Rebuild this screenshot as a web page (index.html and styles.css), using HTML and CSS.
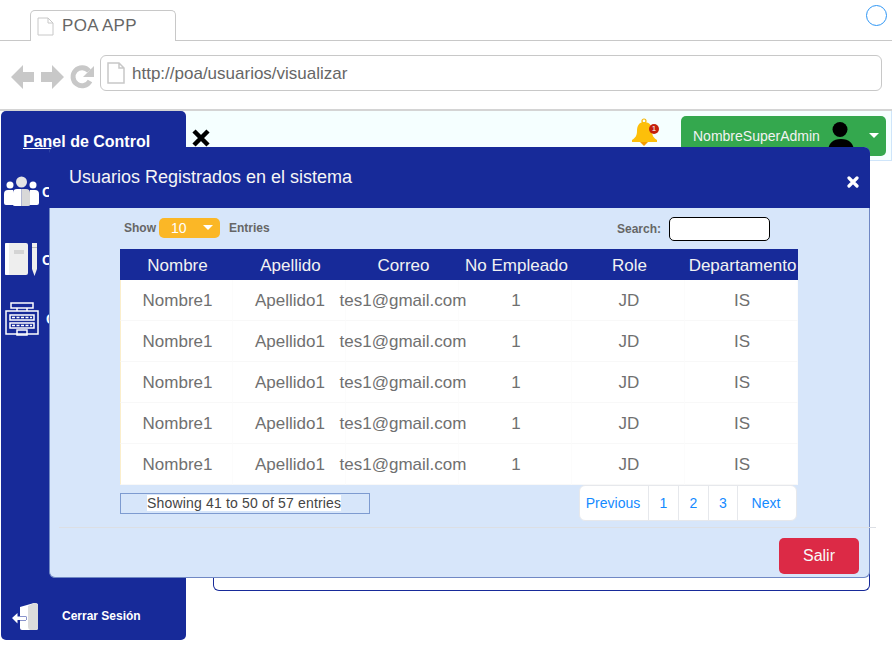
FILE: index.html
```html
<!DOCTYPE html>
<html lang="es">
<head>
  <meta charset="UTF-8" />
  <title>POA APP</title>
  <link rel="stylesheet" href="styles.css">
</head>
<body>
  <div class="tabbar">
    <div class="tab">
      <svg class="page-icon" width="17" height="19" viewBox="0 0 17 19"><path d="M1 1h10l5 5v12H1z M11 1v5h5" fill="#fff" stroke="#c8c8c8" stroke-width="1"/></svg>
      <span>POA APP</span>
    </div>
    <div class="circle"></div>
  </div>
  <div class="addressbar">
    <svg class="nav-icons" width="84" height="26" viewBox="0 0 84 26">
      <path d="M0 13 12 1v7h11v10H12v7z" fill="#c8c8c8"/>
      <path d="M53 13 41 1v7H30v10h11v7z" fill="#c8c8c8"/>
      <path d="M79 17a9 9 0 1 1-1-10" fill="none" stroke="#c8c8c8" stroke-width="5"/>
      <path d="M83 2v11H72z" fill="#c8c8c8"/>
    </svg>
    <div class="url">
      <svg width="18" height="22" viewBox="0 0 18 22"><path d="M1 1h11l5 5v15H1z M12 1v5h5" fill="#fff" stroke="#c8c8c8" stroke-width="1.5"/></svg>
      <span>http://poa/usuarios/visualizar</span>
    </div>
  </div>

  <div class="app">
    <aside class="sidebar">
      <h2 class="side-title">Panel de Control</h2>
      <div class="side-item side-people">
        <svg width="35" height="31" viewBox="0 0 35 31">
          <circle cx="6" cy="9" r="3.5" fill="#fff"/>
          <circle cx="29" cy="9" r="3.5" fill="#fff"/>
          <circle cx="17.5" cy="6" r="5.5" fill="#e4e4e4"/>
          <path d="M0 27V18q0-4 4-4h5v15H2q-2 0-2-2zM35 27V18q0-4-4-4h-5v15h7q2 0 2-2z" fill="#fff"/>
          <path d="M9 29V17q0-4 4-4h4.5v17H11q-2 0-2-1z" fill="#fff"/>
          <path d="M26 29V17q0-4-4-4h-4.500v17H24q2 0 2-1z" fill="#d8d8d8"/>
        </svg>
        <span>C</span>
      </div>
      <div class="side-item side-notes">
        <svg width="33" height="35" viewBox="0 0 33 35">
          <rect x="0" y="1" width="23" height="32" rx="2" fill="#eee"/>
          <rect x="0" y="1" width="4" height="32" rx="1" fill="#fff"/>
          <rect x="9" y="8" width="10" height="4" fill="#d4d4d4"/>
          <path d="M27 1h5v26l-2.500 7-2.500-7z" fill="#eee"/>
          <rect x="27" y="5" width="5" height="1" fill="#bbb"/>
        </svg>
        <span>C</span>
      </div>
      <div class="side-item side-register">
        <svg width="35" height="34" viewBox="0 0 35 34" fill="none" stroke="#fff" stroke-width="1.500">
          <rect x="6" y="1" width="22" height="5"/>
          <path d="M12 6v3M22 6v3"/>
          <rect x="1" y="9" width="32" height="23"/>
          <rect x="5" y="13" width="24" height="5"/>
          <rect x="5" y="21" width="24" height="5"/>
          <path d="M7 15.500h20M7 23.500h20" stroke-dasharray="3 1.500"/>
          <rect x="12" y="28" width="10" height="5"/>
        </svg>
        <span>C</span>
      </div>
      <div class="side-logout">
        <svg width="27" height="28" viewBox="0 0 27 28">
          <path d="M8 5 22 1q4 0 4 2v23q0 2-2 2H10q-2 0-2-2z" fill="#fff"/>
          <path d="M16 4 22 1q4 0 4 2v23q0 2-2 2h-6q-2-1-2-3z" fill="#dcdcdc"/>
          <path d="M0 16 5.500 11v3.500H14v3.500H5.500v3.500z" fill="#fff" stroke="#172a99" stroke-width="1" paint-order="stroke"/>
        </svg>
        <span>Cerrar Sesión</span>
      </div>
    </aside>

    <div class="main">
      <header class="topbar">
        <svg class="close-x" width="20" height="18" viewBox="0 0 20 18"><path d="M3 2l14 14M17 2 3 16" stroke="#000" stroke-width="4.500" fill="none"/></svg>
        <div class="bell">
          <svg width="27" height="30" viewBox="0 0 27 30">
            <circle cx="13" cy="3" r="2" fill="none" stroke="#f7b500" stroke-width="1.200"/>
            <path d="M13 4c-5 0-7 4-7 9 0 5-2 7-5 9v2h25v-2c-3-2-5-4-5-9 0-5-2-9-8-9z" fill="#fdbf0a"/>
            <path d="M9 24h8l-4 4z" fill="#f59c00"/>
          </svg>
          <span class="bell-badge">1</span>
        </div>
        <div class="user-btn">
          <span>NombreSuperAdmin</span>
          <svg width="26" height="34" viewBox="0 0 26 34"><circle cx="12" cy="7.500" r="7.500" fill="#000"/><path d="M0 30c0-9 5-13 13-13s13 4 13 13z" fill="#000"/></svg>
          <i class="caret"></i>
        </div>
      </header>
      <div class="frame"></div>
    </div>
  </div>

  <div class="modal">
    <div class="modal-head">
      <h3>Usuarios Registrados en el sistema</h3>
      <svg class="modal-close" width="12" height="12" viewBox="0 0 12 12"><path d="M2 2l8 8M10 2l-8 8" stroke="#fff" stroke-width="3.200" stroke-linecap="round"/></svg>
    </div>
    <div class="modal-body">
      <div class="dt-top">
        <div class="dt-length">
          <span>Show</span>
          <div class="pill">10<i class="caret"></i></div>
          <span>Entries</span>
        </div>
        <div class="dt-search">
          <span>Search:</span>
          <input type="text">
        </div>
      </div>
      <table class="dt">
        <thead>
          <tr><th>Nombre</th><th>Apellido</th><th>Correo</th><th>No Empleado</th><th>Role</th><th>Departamento</th></tr>
        </thead>
        <tbody>
          <tr><td>Nombre1</td><td>Apellido1</td><td><span class="mail">tes1@gmail.com</span></td><td>1</td><td>JD</td><td>IS</td></tr>
          <tr><td>Nombre1</td><td>Apellido1</td><td><span class="mail">tes1@gmail.com</span></td><td>1</td><td>JD</td><td>IS</td></tr>
          <tr><td>Nombre1</td><td>Apellido1</td><td><span class="mail">tes1@gmail.com</span></td><td>1</td><td>JD</td><td>IS</td></tr>
          <tr><td>Nombre1</td><td>Apellido1</td><td><span class="mail">tes1@gmail.com</span></td><td>1</td><td>JD</td><td>IS</td></tr>
          <tr><td>Nombre1</td><td>Apellido1</td><td><span class="mail">tes1@gmail.com</span></td><td>1</td><td>JD</td><td>IS</td></tr>
        </tbody>
      </table>
      <div class="dt-bottom">
        <div class="dt-info"><span>Showing 41 to 50 of 57 entries</span></div>
        <div class="pagination">
          <a class="pg-prev">Previous</a><a>1</a><a>2</a><a class="pg-last">3</a><a class="pg-next">Next</a>
        </div>
      </div>
    </div>
    <div class="modal-foot">
      <button class="btn-salir">Salir</button>
    </div>
  </div>
</body>
</html>
```

FILE: styles.css
```css
* {
  box-sizing: border-box;
}

body {
  margin: 0;
  height: 645px;
  overflow: hidden;
  font-family: "Liberation Sans", Arial, sans-serif;
  background-color: #fff;
  position: relative;
}

.tabbar {
  height: 41px;
  padding: 10px 5px 0 30px;
  border-bottom: 1px solid #c8c8c8;
  display: flex;
  justify-content: space-between;
  align-items: flex-start;
}

.tab {
  width: 146px;
  height: 31px;
  padding: 5px 0 0 6px;
  display: flex;
  align-items: flex-start;
  gap: 8px;
  background-color: #fff;
  border: 1px solid #c8c8c8;
  border-bottom: none;
  border-radius: 5px 5px 0 0;
  font-size: 17px;
  line-height: 19px;
  letter-spacing: 0.3px;
  color: #666;
}

.page-icon {
  flex: none;
  margin-top: 1px;
}

.circle {
  width: 21px;
  height: 21px;
  margin-top: -5px;
  border: 1px solid #2e96f5;
  border-radius: 50%;
}

.addressbar {
  height: 70px;
  padding: 14px 10px 0 11px;
  border-bottom: 2px solid #d4d4d4;
  display: flex;
  align-items: flex-start;
}

.nav-icons {
  margin: 9px 5px 0 0;
  flex: none;
}

.url {
  flex: 1;
  height: 36px;
  padding: 1px 0 0 6px;
  display: flex;
  align-items: center;
  gap: 7px;
  border: 1px solid #c8c8c8;
  border-radius: 6px;
  font-size: 17px;
  color: #666;
}

.url svg {
  margin-top: -1px;
}

.app {
  display: flex;
  height: 534px;
  padding-left: 1px;
}

.sidebar {
  width: 185px;
  height: 529px;
  padding-top: 21px;
  display: flex;
  flex-direction: column;
  flex: none;
  background-color: #172a99;
  border-radius: 5px;
  color: #fff;
}

.side-title {
  margin: 0 0 0 22px;
  font-size: 16px;
  line-height: 19px;
  font-weight: bold;
  text-decoration: underline;
}

.side-item {
  display: flex;
  align-items: center;
  padding-left: 3px;
  font-size: 14px;
  font-weight: bold;
}

.side-people {
  margin-top: 25px;
  gap: 3px;
}

.side-notes {
  margin-top: 35px;
  padding-left: 4px;
  gap: 4px;
}

.side-register {
  margin-top: 25px;
  padding-left: 4px;
  gap: 6px;
}

.side-logout {
  margin-top: auto;
  margin-bottom: 10px;
  padding-left: 11px;
  display: flex;
  align-items: center;
  gap: 23px;
  font-size: 12px;
  font-weight: bold;
}

.main {
  flex: 1;
  display: flex;
  flex-direction: column;
}

.topbar {
  height: 50px;
  padding: 5px 5px 0 5px;
  display: flex;
  align-items: flex-start;
  background-color: #f5ffff;
  border-bottom: 1px solid #cfe5fa;
  border-right: 1px solid #cfe5fa;
}

.close-x {
  margin-top: 13px;
}

.bell {
  margin: 2px 23px 0 auto;
  position: relative;
}

.bell-badge {
  position: absolute;
  top: 6px;
  right: -1px;
  width: 10px;
  height: 10px;
  border-radius: 50%;
  background-color: #c4200c;
  color: #fff;
  font-size: 8px;
  line-height: 10px;
  text-align: center;
}

.user-btn {
  width: 205px;
  height: 40px;
  padding: 6px 7px 0 12px;
  display: flex;
  align-items: flex-start;
  background-color: #34a84e;
  border-radius: 5px;
  color: #f2f2f2;
  font-size: 14px;
}

.user-btn span {
  margin: 6px 8px 0 0;
  line-height: 17px;
}

.user-btn svg {
  flex: none;
}

.caret {
  width: 0;
  height: 0;
  border-left: 5px solid transparent;
  border-right: 5px solid transparent;
  border-top: 5px solid #fff;
}

.user-btn .caret {
  margin: 11px 0 0 15px;
}

.frame {
  height: 430px;
  margin: 0 22px 0 27px;
  border: 1px solid #172a99;
  border-top: none;
  border-radius: 0 0 6px 6px;
}

.modal {
  position: absolute;
  top: 147px;
  left: 49px;
  width: 821px;
  height: 431px;
  display: flex;
  flex-direction: column;
  background-color: #d7e6fa;
  border: 1px solid #7088c4;
  border-top: none;
  border-radius: 6px;
  color: #666;
}

.modal-head {
  height: 61px;
  margin: 0 -1px;
  padding: 0 11px 0 20px;
  display: flex;
  justify-content: space-between;
  background-color: #172a99;
  border-radius: 6px 6px 0 0;
  color: #f5f5f5;
}

.modal-head h3 {
  margin: 20px 0 0;
  font-size: 18px;
  line-height: 20px;
  font-weight: normal;
}

.modal-close {
  margin-top: 29px;
}

.modal-body {
  height: 319px;
  padding: 0 71px 0 70px;
}

.dt-top {
  height: 41px;
  padding: 9px 28px 0 4px;
  display: flex;
  justify-content: space-between;
  align-items: flex-start;
  font-size: 12px;
  font-weight: bold;
}

.dt-length {
  display: flex;
  align-items: center;
  height: 21px;
  gap: 3px;
}

.dt-length span:last-child {
  margin-left: 6px;
}

.pill {
  width: 61px;
  height: 20px;
  padding-left: 12px;
  display: flex;
  align-items: center;
  background-color: #fbb726;
  border-radius: 5px;
  color: #fff;
  font-size: 14px;
  font-weight: normal;
}

.pill .caret {
  margin-left: 16px;
}

.dt-search {
  display: flex;
  align-items: center;
  gap: 8px;
}

.dt-search input {
  width: 101px;
  height: 24px;
  background-color: #fff;
  border: 1px solid #000;
  border-radius: 5px;
}

.dt {
  width: 678px;
  border-collapse: separate;
  border-spacing: 0;
  table-layout: fixed;
  background-color: #fff;
  text-align: center;
}

.dt th {
  height: 31px;
  padding: 3px 0 0 2px;
  background-color: #172a99;
  color: #f2f2f2;
  font-size: 17px;
  font-weight: normal;
}

.dt td {
  height: 41px;
  padding: 2px 0 0 2px;
  border-bottom: 1px solid #f8f8f8;
  border-right: 1px solid #fcfcfc;
  font-size: 17px;
  color: #707070;
}

.dt td:first-child {
  border-left: 1px solid #fbeecb;
}

.mail {
  display: inline-block;
  margin: 0 -10px;
  white-space: nowrap;
}

.dt-bottom {
  display: flex;
  justify-content: space-between;
  align-items: flex-start;
}

.dt-info {
  width: 250px;
  height: 21px;
  margin-top: 8px;
  padding-left: 26px;
  border: 1px solid #7e9bd0;
  font-size: 14px;
  line-height: 18px;
  letter-spacing: 0.17px;
  color: #444;
}

.dt-info span {
  background-color: #fff;
}

.pagination {
  height: 36px;
  margin-right: 1px;
  display: flex;
  background-color: #fff;
  border: 1px solid #e6e8ec;
  border-radius: 6px;
  font-size: 14px;
  color: #148aff;
}

.pagination a {
  width: 30px;
  line-height: 35px;
  text-align: center;
  border-right: 1px solid #e6e8ec;
}

.pagination .pg-prev {
  width: 69px;
  padding-right: 2px;
}

.pagination .pg-last {
  width: 29px;
}

.pagination .pg-next {
  width: 58px;
  padding-right: 2px;
  border-right: none;
}

.modal-foot {
  margin: 0 -7px 0 9px;
  padding: 10px 17px 0 0;
  display: flex;
  justify-content: flex-end;
  border-top: 1px solid #dcdfe4;
}

.btn-salir {
  width: 80px;
  height: 36px;
  padding: 0;
  background-color: #dc2a46;
  border: none;
  border-radius: 5px;
  color: #f8f8f8;
  font-family: inherit;
  font-size: 16px;
}
```
